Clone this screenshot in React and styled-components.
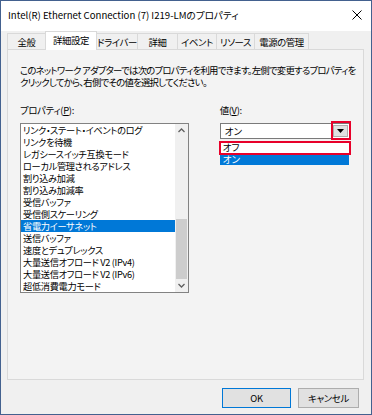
import React from "react";
import styled, { createGlobalStyle } from "styled-components";

const Global = createGlobalStyle`
  html, body { margin: 0; padding: 0; background: #f0f0f0; }
  body {
    font-family: "Noto Sans CJK JP", "Noto Sans", sans-serif;
    font-feature-settings: "palt";
    color: #000;
  }
  * { box-sizing: border-box; }
`;

const Window = styled.div`
  width: 372px;
  height: 415px;
  border: 1px solid #43618f;
  display: flex;
  flex-direction: column;
  background: #f0f0f0;
  overflow: hidden;
`;

const TitleBar = styled.div`
  height: 30px;
  background: #fff;
  display: flex;
  align-items: center;
  justify-content: space-between;
  padding: 0 9px 2px 7px;
  font-size: 9.6px;
  white-space: nowrap;
`;

const Body = styled.div`
  flex: 1;
  display: flex;
  flex-direction: column;
  padding: 0 7px 0 6px;
`;

const TabStrip = styled.div`
  height: 18px;
  display: flex;
  align-items: flex-end;
  position: relative;
  z-index: 1;
`;

const Tab = styled.div`
  width: ${(p) => p.$w}px;
  height: ${(p) => (p.$active ? 19 : 16)}px;
  margin-left: ${(p) => (p.$first ? 0 : -1)}px;
  margin-bottom: ${(p) => (p.$active ? -1 : 0)}px;
  border: 1px solid #d9d9d9;
  border-bottom: 0;
  background: ${(p) => (p.$active ? "#fff" : "#f0f0f0")};
  font-size: 9.4px;
  letter-spacing: -0.4px;
  white-space: nowrap;
  display: flex;
  align-items: center;
  justify-content: center;
  padding-top: ${(p) => (p.$active ? 0 : 1)}px;
  padding-bottom: ${(p) => (p.$active ? 2 : 0)}px;
  position: relative;
  z-index: ${(p) => (p.$active ? 2 : 1)};
`;

const Panel = styled.div`
  height: 331px;
  border: 1px solid #d9d9d9;
  background: #f3f3f3;
  padding: 15px 12px 0 12px;
  display: flex;
  flex-direction: column;
`;

const Description = styled.p`
  margin: 0;
  font-size: 9.4px;
  line-height: 11.5px;
  letter-spacing: -0.75px;
  white-space: nowrap;
`;

const Columns = styled.div`
  display: flex;
  margin-top: 16px;
`;

const Column = styled.div`
  display: flex;
  flex-direction: column;
  width: ${(p) => p.$w}px;
  margin-left: ${(p) => p.$ml || 0}px;
`;

const Label = styled.div`
  font-size: 9.4px;
  height: 12px;
  line-height: 12px;
  letter-spacing: -0.3px;
  white-space: nowrap;
  u { text-decoration: underline; }
`;

const ListBox = styled.div`
  margin-top: 7px;
  height: 170px;
  border: 1px solid #828282;
  background: #fff;
  display: flex;
`;

const Items = styled.div`
  flex: 1;
  display: flex;
  flex-direction: column;
`;

const Item = styled.div`
  height: 12px;
  line-height: 12px;
  font-size: 9.2px;
  letter-spacing: -0.3px;
  padding-left: 2px;
  white-space: nowrap;
  background: ${(p) => (p.$sel ? "#0078d7" : "transparent")};
  color: ${(p) => (p.$sel ? "#fff" : "#000")};
`;

const Dot = styled.span`
  display: inline-block;
  width: 4px;
  text-align: center;
  overflow: visible;
  letter-spacing: 0;
`;

const ScrollBar = styled.div`
  width: 13px;
  background: #f0f0f0;
  display: flex;
  flex-direction: column;
`;

const Arrow = styled.div`
  height: 13px;
  display: flex;
  align-items: center;
  justify-content: center;
`;

const Track = styled.div`
  flex: 1;
  display: flex;
  flex-direction: column;
  justify-content: flex-end;
`;

const Thumb = styled.div`
  height: 60px;
  margin: 0 1px;
  background: #cdcdcd;
`;

const ComboWrap = styled.div`
  position: relative;
  margin-top: 7px;
`;

const Combo = styled.div`
  height: 16px;
  width: 130px;
  border: 1px solid #7a7a7a;
  background: #fff;
  display: flex;
  align-items: center;
  justify-content: space-between;
  padding: 0 1px 0 4px;
  font-size: 9.6px;
`;

const DropButton = styled.div`
  width: 15px;
  height: 12px;
  background: #e1e1e1;
  border: 1px solid #adadad;
  display: flex;
  align-items: center;
  justify-content: center;
`;

const DropList = styled.div`
  width: 129px;
  margin-top: 2px;
  background: #fff;
`;

const Option = styled.div`
  height: 12px;
  line-height: 12px;
  font-size: 9.6px;
  padding-left: 3px;
  background: ${(p) => (p.$sel ? "#0078d7" : "#fff")};
  color: ${(p) => (p.$sel ? "#fff" : "#000")};
`;

const RedBox = styled.div`
  position: absolute;
  left: ${(p) => p.$x}px;
  top: ${(p) => p.$y}px;
  width: ${(p) => p.$w}px;
  height: ${(p) => p.$h}px;
  border: 2px solid #e8002a;
  pointer-events: none;
`;

const ButtonRow = styled.div`
  display: flex;
  justify-content: flex-end;
  gap: 7px;
  padding: 8px 5px 0 0;
`;

const Button = styled.div`
  width: ${(p) => p.$w}px;
  height: 20px;
  border: 1px solid ${(p) => (p.$default ? "#0078d7" : "#adadad")};
  background: #e1e1e1;
  font-size: 9.4px;
  letter-spacing: -0.3px;
  display: flex;
  align-items: center;
  justify-content: center;
`;

const tabs = [
  { label: "全般", w: 39 },
  { label: "詳細設定", w: 52, active: true },
  { label: "ドライバー", w: 42 },
  { label: "詳細", w: 41 },
  { label: "イベント", w: 40 },
  { label: "リソース", w: 39 },
  { label: "電源の管理", w: 55 },
];

const items = [
  "リンク・ステート・イベントのログ",
  "リンクを待機",
  "レガシースイッチ互換モード",
  "ローカル管理されるアドレス",
  "割り込み加減",
  "割り込み加減率",
  "受信バッファ",
  "受信側スケーリング",
  "省電力イーサネット",
  "送信バッファ",
  "速度とデュプレックス",
  "大量送信オフロード V2 (IPv4)",
  "大量送信オフロード V2 (IPv6)",
  "超低消費電力モード",
];

const renderItem = (text) =>
  text.split("・").flatMap((part, i) =>
    i === 0 ? [part] : [<Dot key={i}>・</Dot>, part]
  );

const Chevron = ({ up }) => (
  <svg width="7" height="5" viewBox="0 0 7 5">
    <path
      d={up ? "M0.5 4 L3.5 1 L6.5 4" : "M0.5 1 L3.5 4 L6.5 1"}
      fill="none"
      stroke="#606060"
      strokeWidth="1.3"
    />
  </svg>
);

export default function App() {
  return (
    <>
      <Global />
      <Window>
        <TitleBar>
          <span>Intel(R) Ethernet Connection (7) I219-LMのプロパティ</span>
          <svg width="10" height="10" viewBox="0 0 10 10">
            <path d="M0.5 0.5 L9.5 9.5 M9.5 0.5 L0.5 9.5" stroke="#000" strokeWidth="1" />
          </svg>
        </TitleBar>
        <Body>
          <TabStrip>
            {tabs.map((t, i) => (
              <Tab key={t.label} $w={t.w} $active={t.active} $first={i === 0}>
                {t.label}
              </Tab>
            ))}
          </TabStrip>
          <Panel>
            <Description>
              このネットワーク アダプターでは次のプロパティを利用できます。左側で変更するプロパティを
              <br />
              クリックしてから、右側でその値を選択してください。
            </Description>
            <Columns>
              <Column $w={172}>
                <Label>
                  プロパティ(<u>P</u>):
                </Label>
                <ListBox>
                  <Items>
                    {items.map((it) => (
                      <Item key={it} $sel={it === "省電力イーサネット"}>
                        {renderItem(it)}
                      </Item>
                    ))}
                  </Items>
                  <ScrollBar>
                    <Arrow>
                      <Chevron up />
                    </Arrow>
                    <Track>
                      <Thumb />
                    </Track>
                    <Arrow>
                      <Chevron />
                    </Arrow>
                  </ScrollBar>
                </ListBox>
              </Column>
              <Column $w={134} $ml={31}>
                <Label>
                  値(<u>V</u>):
                </Label>
                <ComboWrap>
                  <Combo>
                    <span>オン</span>
                    <DropButton>
                      <svg width="7" height="4" viewBox="0 0 7 4">
                        <path d="M0 0 L7 0 L3.5 4 Z" fill="#000" />
                      </svg>
                    </DropButton>
                  </Combo>
                  <DropList>
                    <Option>オフ</Option>
                    <Option $sel>オン</Option>
                  </DropList>
                  <RedBox $x={111} $y={-2} $w={20} $h={19} />
                  <RedBox $x={-1} $y={18} $w={132} $h={14} />
                </ComboWrap>
              </Column>
            </Columns>
          </Panel>
          <ButtonRow>
            <Button $w={69} $default>
              OK
            </Button>
            <Button $w={61}>キャンセル</Button>
          </ButtonRow>
        </Body>
      </Window>
    </>
  );
}
